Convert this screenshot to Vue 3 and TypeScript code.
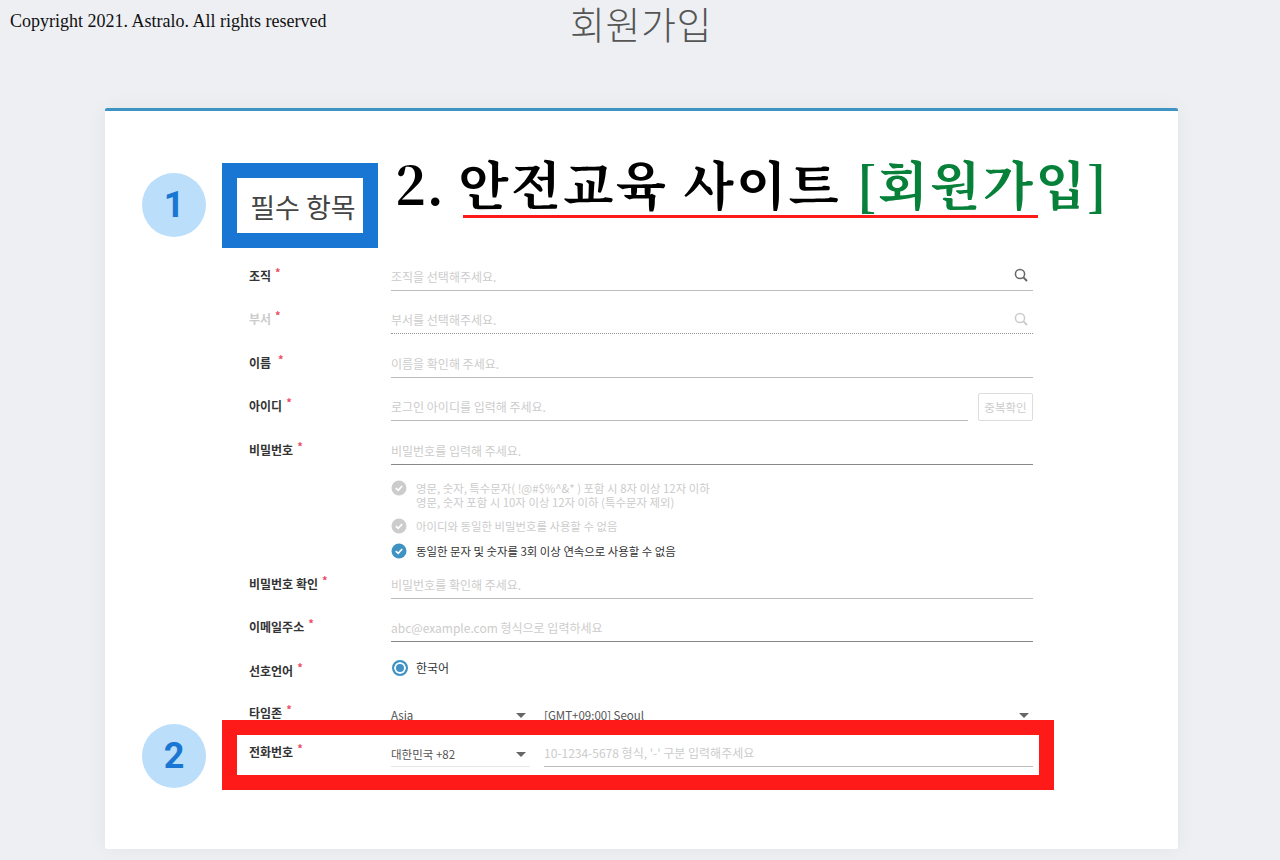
<script setup lang="ts">
interface Row { label: string; hint: string; gap?: number; labelOff?: boolean; search?: boolean; dark?: boolean; dotted?: boolean; button?: boolean }
const topRows: Row[] = [
  { label: '조직', hint: '조직을 선택해주세요.', search: true },
  { label: '부서', hint: '부서를 선택해주세요.', search: true, labelOff: true, dotted: true },
  { label: '이름', hint: '이름을 확인해 주세요.', gap: 7 },
  { label: '아이디', hint: '로그인 아이디를 입력해 주세요.', button: true },
  { label: '비밀번호', hint: '비밀번호를 입력해 주세요.', dark: true },
]
const rules = [
  { text: ['영문, 숫자, 특수문자( !@#$%^&* ) 포함 시 8자 이상 12자 이하', '영문, 숫자 포함 시 10자 이상 12자 이하 (특수문자 제외)'], on: false },
  { text: ['아이디와 동일한 비밀번호를 사용할 수 없음'], on: false },
  { text: ['동일한 문자 및 숫자를 3회 이상 연속으로 사용할 수 없음'], on: true },
]
</script>

<template>
  <div class="page">
    <header class="top">
      <p class="copy">Copyright 2021. Astralo. All rights reserved</p>
      <h1 class="title">회원가입</h1>
    </header>
    <main class="card">
      <span class="step step-one">1</span>
      <span class="step step-two">2</span>
      <div class="head">
        <div class="tag"><span>필수 항목</span></div>
        <h2 class="big"><span class="num">2. </span>안전교육 사이트 <em>[회원가입]</em><i class="under"></i></h2>
      </div>
      <div class="form">
        <div v-for="r in topRows" :key="r.label" class="row">
          <div class="lab" :class="{ off: r.labelOff }">{{ r.label }}<b :style="r.gap ? { marginLeft: r.gap + 'px' } : undefined">*</b></div>
          <div class="fieldwrap">
            <div class="field" :class="{ dark: r.dark, dotted: r.dotted }">
              <span>{{ r.hint }}</span>
              <svg v-if="r.search" class="glass" :class="{ dim: r.labelOff }" width="14" height="14" viewBox="0 0 14 14" fill="none" stroke="currentColor">
                <circle cx="6" cy="6" r="4.6" stroke-width="1.5" />
                <path d="M9.4 9.4 13 13" stroke-width="2" />
              </svg>
            </div>
            <button v-if="r.button" class="dup" type="button">중복확인</button>
          </div>
        </div>

        <ul class="rules">
          <li v-for="(rule, i) in rules" :key="i" :class="{ on: rule.on }">
            <svg width="16" height="16" viewBox="0 0 16 16">
              <circle cx="8" cy="8" r="7.5" fill="currentColor" />
              <path d="M4.8 8.2 7.2 10.4 11.2 6" fill="none" stroke="#fff" stroke-width="1.7" />
            </svg>
            <div><div v-for="t in rule.text" :key="t">{{ t }}</div></div>
          </li>
        </ul>

        <div class="row tight">
          <div class="lab">비밀번호 확인<b>*</b></div>
          <div class="field"><span>비밀번호를 확인해 주세요.</span></div>
        </div>
        <div class="row">
          <div class="lab">이메일주소<b>*</b></div>
          <div class="field dark"><span>abc@example.com 형식으로 입력하세요</span></div>
        </div>
        <div class="row">
          <div class="lab">선호언어<b>*</b></div>
          <label class="radio"><i></i>한국어</label>
        </div>
        <div class="row zone">
          <div class="lab">타임존<b>*</b></div>
          <div class="pair">
            <div class="sel"><span>Asia</span><i></i></div>
            <div class="sel"><span>[GMT+09:00] Seoul</span><i></i></div>
          </div>
        </div>
        <div class="mark">
          <div class="row phone">
            <div class="lab">전화번호<b>*</b></div>
            <div class="pair">
              <div class="sel"><span>대한민국 +82</span><i></i></div>
              <div class="field"><span>10-1234-5678 형식, '-' 구분 입력해주세요</span></div>
            </div>
          </div>
        </div>
      </div>
    </main>
  </div>
</template>

<style>
html, body { margin: 0; background: #edeff3; }
</style>

<style scoped>
.page { height: 860px; overflow: hidden; background: #edeff3; font-family: "Noto Sans CJK KR", "Noto Sans", sans-serif; font-size: 12px; color: #333; }
.top { height: 108px; display: grid; grid-template-columns: 1fr auto 1fr; align-items: start; }
.copy { margin: 10px 0 0 10px; font: 18px/22px "Liberation Serif", "Noto Sans CJK KR", serif; color: #111; white-space: nowrap; }
.title { margin: -1px 0 0 2px; font-size: 38px; line-height: 48px; font-weight: 300; color: #555; letter-spacing: 0.5px; }
.card { position: relative; width: 1073px; margin-left: 105px; box-sizing: border-box; padding: 52px 0 59px 117px; background: #fff; border-top: 3px solid #3f93c2; border-radius: 2px; box-shadow: 0 0 20px rgba(0, 0, 0, 0.05); }
.step { position: absolute; left: 37px; width: 64px; height: 64px; border-radius: 50%; background: #bbdefb; color: #1976d2; font: 700 36px/64px Roboto, sans-serif; text-align: center; }
.step-one { top: 62px; }
.step-two { top: 613px; }
.head { display: flex; gap: 18px; height: 85px; margin-bottom: -1px; }
.tag { width: 156px; height: 85px; box-sizing: border-box; border: 15px solid #1976d2; padding: 2px 0 0 6px; display: flex; align-items: center; justify-content: center; font-size: 27px; color: #444; white-space: nowrap; }
.big { position: relative; margin: -18px 0 0 -1px; font-family: "Noto Serif CJK KR", "Noto Sans CJK KR", "Liberation Serif", serif; font-size: 52px; line-height: 76px; font-weight: 700; color: #000; white-space: nowrap; letter-spacing: 2.25px; }
.big .num { letter-spacing: 0.67px; }
.big em { font-style: normal; color: #07803a; }
.under { position: absolute; left: 68px; top: 70px; width: 575px; height: 3px; background: #ff1a1a; }
.form { width: 784px; margin-left: 27px; }
.row { height: 43.5px; display: grid; grid-template-columns: 142px 1fr; align-items: end; box-sizing: border-box; }
.row.tight { height: 40px; }
.row.zone { height: 42px; }
.lab { height: 28px; line-height: 26px; font-weight: 600; color: #333; white-space: nowrap; }
.lab.off { color: #ccc; }
.lab b { position: relative; top: -4px; margin-left: 4px; font-size: 11px; font-weight: 700; color: #ef4a62; }
.fieldwrap { display: flex; align-items: flex-end; gap: 10px; }
.field { flex: 1; height: 26px; box-sizing: border-box; padding-bottom: 2px; display: flex; align-items: center; justify-content: space-between; border-bottom: 1px solid #bbb; color: #ccc; }
.field.dark { border-bottom-color: #888; }
.field.dotted { border-bottom: 1px dotted #999; }
.glass { color: #666; margin: -2px 5px 0 0; }
.glass.dim { color: #ccc; }
.dup { width: 55px; height: 28px; padding: 0; border: 1px solid #ddd; border-radius: 2px; background: #fff; color: #ccc; font: 11.5px "Noto Sans CJK KR", sans-serif; }
.rules { list-style: none; margin: 0; padding: 16px 0 0 142px; display: flex; flex-direction: column; gap: 10px; font-size: 11.4px; line-height: 14px; color: #ccc; }
.rules li { display: flex; gap: 9px; }
.rules svg { flex: none; margin-top: -1px; }
.rules li.on { color: #333; }
.rules li.on svg { color: #3f93c2; }
.radio { display: flex; align-items: center; gap: 8px; height: 16px; margin-bottom: 10px; line-height: 16px; }
.radio i { width: 12px; height: 12px; border: 2px solid #3f93c2; border-radius: 50%; background: #3f93c2; box-shadow: inset 0 0 0 2px #fff; margin-left: 1px; }
.pair { display: grid; grid-template-columns: 139px 1fr; gap: 14px; }
.sel { height: 26px; box-sizing: border-box; display: flex; align-items: center; justify-content: space-between; padding-top: 2px; border-bottom: 1px solid #e6e6e6; color: #555; font-size: 11.5px; }
.sel i { width: 0; height: 0; margin: 0 4px 0 0; border: 5px solid transparent; border-top: 5px solid #666; border-bottom: 0; }
.mark { position: relative; width: 832px; height: 70px; margin: -8px 0 0 -27px; box-sizing: border-box; padding: 0 6px 0 12px; background: #fff; border: 15px solid #ff1a1a; }
.row.phone { height: 32px; }
</style>
